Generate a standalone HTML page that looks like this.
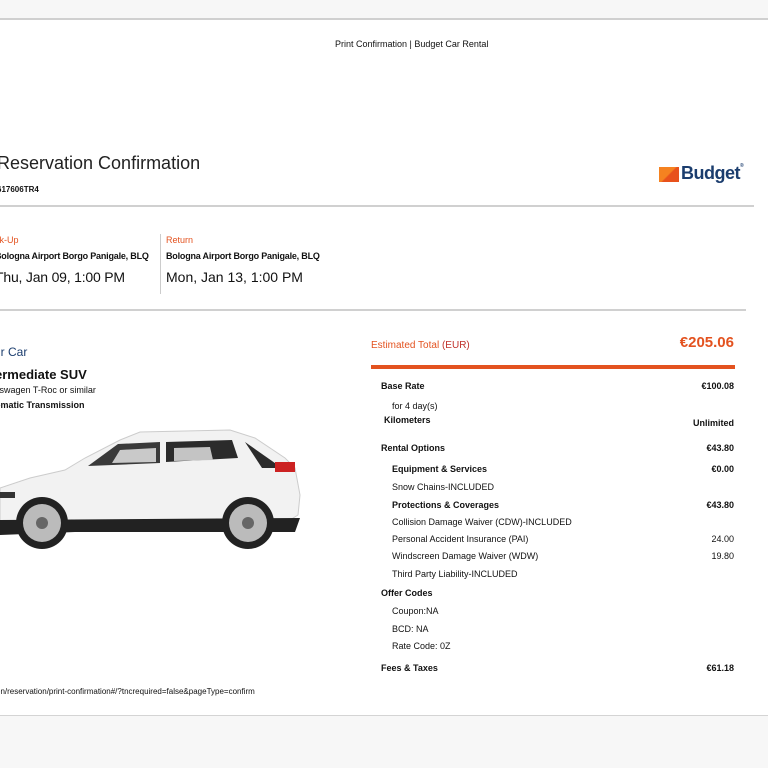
<!DOCTYPE html>
<html><head><meta charset="utf-8"><style>
*{margin:0;padding:0;box-sizing:border-box}
body{width:768px;height:768px;background:#fff;font-family:"Liberation Sans",sans-serif;color:#111;position:relative;overflow:hidden}
.a{position:absolute;white-space:nowrap;line-height:1}
.b{font-weight:bold}
.r{text-align:right;right:34px}
.s{font-size:9px}
.o{color:#e3521f}
</style></head><body>
<div class="a" style="left:0;top:0;width:768px;height:20px;background:#f7f7f7;border-bottom:2px solid #d0d0d0"></div>
<div class="a" style="left:0;top:715px;width:768px;height:53px;background:#f7f7f7;border-top:1px solid #d4d4d4"></div>
<div class="a" style="left:335px;top:40px;font-size:9px">Print Confirmation | Budget Car Rental</div>

<div class="a" style="left:-3px;top:154px;font-size:18px;color:#222">Reservation Confirmation</div>
<div class="a b" style="left:-3px;top:186px;font-size:8px">617606TR4</div>
<div class="a" style="left:659px;top:167px;width:20px;height:15px;background:linear-gradient(135deg,#f58220 50%,#e8511c 50%)"></div>
<div class="a b" style="left:681px;top:164px;font-size:18px;color:#1b3d6e;letter-spacing:-0.5px">Budget<span style="font-size:5px;vertical-align:top">®</span></div>
<div class="a" style="left:0;top:205px;width:754px;height:2px;background:#d0d0d0"></div>

<div class="a o" style="left:-5px;top:236px;font-size:9px">ck-Up</div>
<div class="a b" style="left:-5px;top:252px;font-size:9px;letter-spacing:-0.2px">Bologna Airport Borgo Panigale, BLQ</div>
<div class="a" style="left:-5px;top:270px;font-size:14px;letter-spacing:-0.2px">Thu, Jan 09, 1:00 PM</div>
<div class="a" style="left:160px;top:234px;width:1px;height:60px;background:#ccc"></div>
<div class="a o" style="left:166px;top:236px;font-size:9px">Return</div>
<div class="a b" style="left:166px;top:252px;font-size:9px;letter-spacing:-0.2px">Bologna Airport Borgo Panigale, BLQ</div>
<div class="a" style="left:166px;top:270px;font-size:14px">Mon, Jan 13, 1:00 PM</div>
<div class="a" style="left:0;top:309px;width:746px;height:2px;background:#d0d0d0"></div>

<div class="a" style="left:-6px;top:346px;font-size:12px;color:#1b3d6e">ur Car</div>
<div class="a b" style="left:-5px;top:368px;font-size:13px">ermediate SUV</div>
<div class="a" style="left:-5px;top:386px;font-size:9px">kswagen T-Roc or similar</div>
<div class="a b" style="left:-5px;top:401px;font-size:9px">omatic Transmission</div>

<svg class="a" style="left:0;top:420px" width="310" height="140" viewBox="0 0 310 140">
<path d="M0 68 L30 58 L65 50 L85 38 L120 20 L140 12 L230 10 L255 18 L285 38 L295 48 L300 75 L298 95 L285 103 L0 108 Z" fill="#f2f2f2" stroke="#ccc" stroke-width="1"/>
<path d="M88 46 L118 24 L160 22 L160 43 Z" fill="#3a3a3a"/>
<path d="M112 43 L120 30 L156 28 L156 42 Z" fill="#c9c9c9"/>
<path d="M166 22 L232 20 L238 38 L166 42 Z" fill="#2b2b2b"/>
<path d="M174 28 L210 27 L213 40 L174 41 Z" fill="#c4c4c4"/>
<path d="M245 22 L282 48 L262 48 Z" fill="#2b2b2b"/>
<rect x="275" y="42" width="20" height="10" fill="#c22"/>
<path d="M0 100 L300 98 L295 112 L75 112 L0 115 Z" fill="#222"/>
<circle cx="42" cy="103" r="26" fill="#222"/><circle cx="42" cy="103" r="19" fill="#bbb"/><circle cx="42" cy="103" r="6" fill="#666"/>
<circle cx="248" cy="103" r="26" fill="#222"/><circle cx="248" cy="103" r="19" fill="#bbb"/><circle cx="248" cy="103" r="6" fill="#666"/>
<rect x="0" y="72" width="15" height="6" fill="#333"/>
</svg>

<div class="a" style="left:-4px;top:688px;font-size:8px">en/reservation/print-confirmation#/?tncrequired=false&amp;pageType=confirm</div>

<div class="a o" style="left:371px;top:341px;font-size:10px">Estimated Total <span style="color:#c0302a">(EUR)</span></div>
<div class="a o r b" style="top:335px;font-size:15px">€205.06</div>
<div class="a" style="left:371px;top:365px;width:364px;height:4px;background:#e3521f"></div>

<div class="a b s" style="left:381px;top:382px">Base Rate</div><div class="a b s r" style="top:382px">€100.08</div>
<div class="a s" style="left:392px;top:402px">for 4 day(s)</div>
<div class="a b s" style="left:384px;top:416px">Kilometers</div><div class="a b s r" style="top:419px">Unlimited</div>
<div class="a b s" style="left:381px;top:444px">Rental Options</div><div class="a b s r" style="top:444px">€43.80</div>
<div class="a b s" style="left:392px;top:465px">Equipment &amp; Services</div><div class="a b s r" style="top:465px">€0.00</div>
<div class="a s" style="left:392px;top:483px">Snow Chains-INCLUDED</div>
<div class="a b s" style="left:392px;top:501px">Protections &amp; Coverages</div><div class="a b s r" style="top:501px">€43.80</div>
<div class="a s" style="left:392px;top:518px">Collision Damage Waiver (CDW)-INCLUDED</div>
<div class="a s" style="left:392px;top:535px">Personal Accident Insurance (PAI)</div><div class="a s r" style="top:535px">24.00</div>
<div class="a s" style="left:392px;top:552px">Windscreen Damage Waiver (WDW)</div><div class="a s r" style="top:552px">19.80</div>
<div class="a s" style="left:392px;top:570px">Third Party Liability-INCLUDED</div>
<div class="a b s" style="left:381px;top:589px">Offer Codes</div>
<div class="a s" style="left:392px;top:607px">Coupon:NA</div>
<div class="a s" style="left:392px;top:625px">BCD: NA</div>
<div class="a s" style="left:392px;top:642px">Rate Code: 0Z</div>
<div class="a b s" style="left:381px;top:664px">Fees &amp; Taxes</div><div class="a b s r" style="top:664px">€61.18</div>
</body></html>
